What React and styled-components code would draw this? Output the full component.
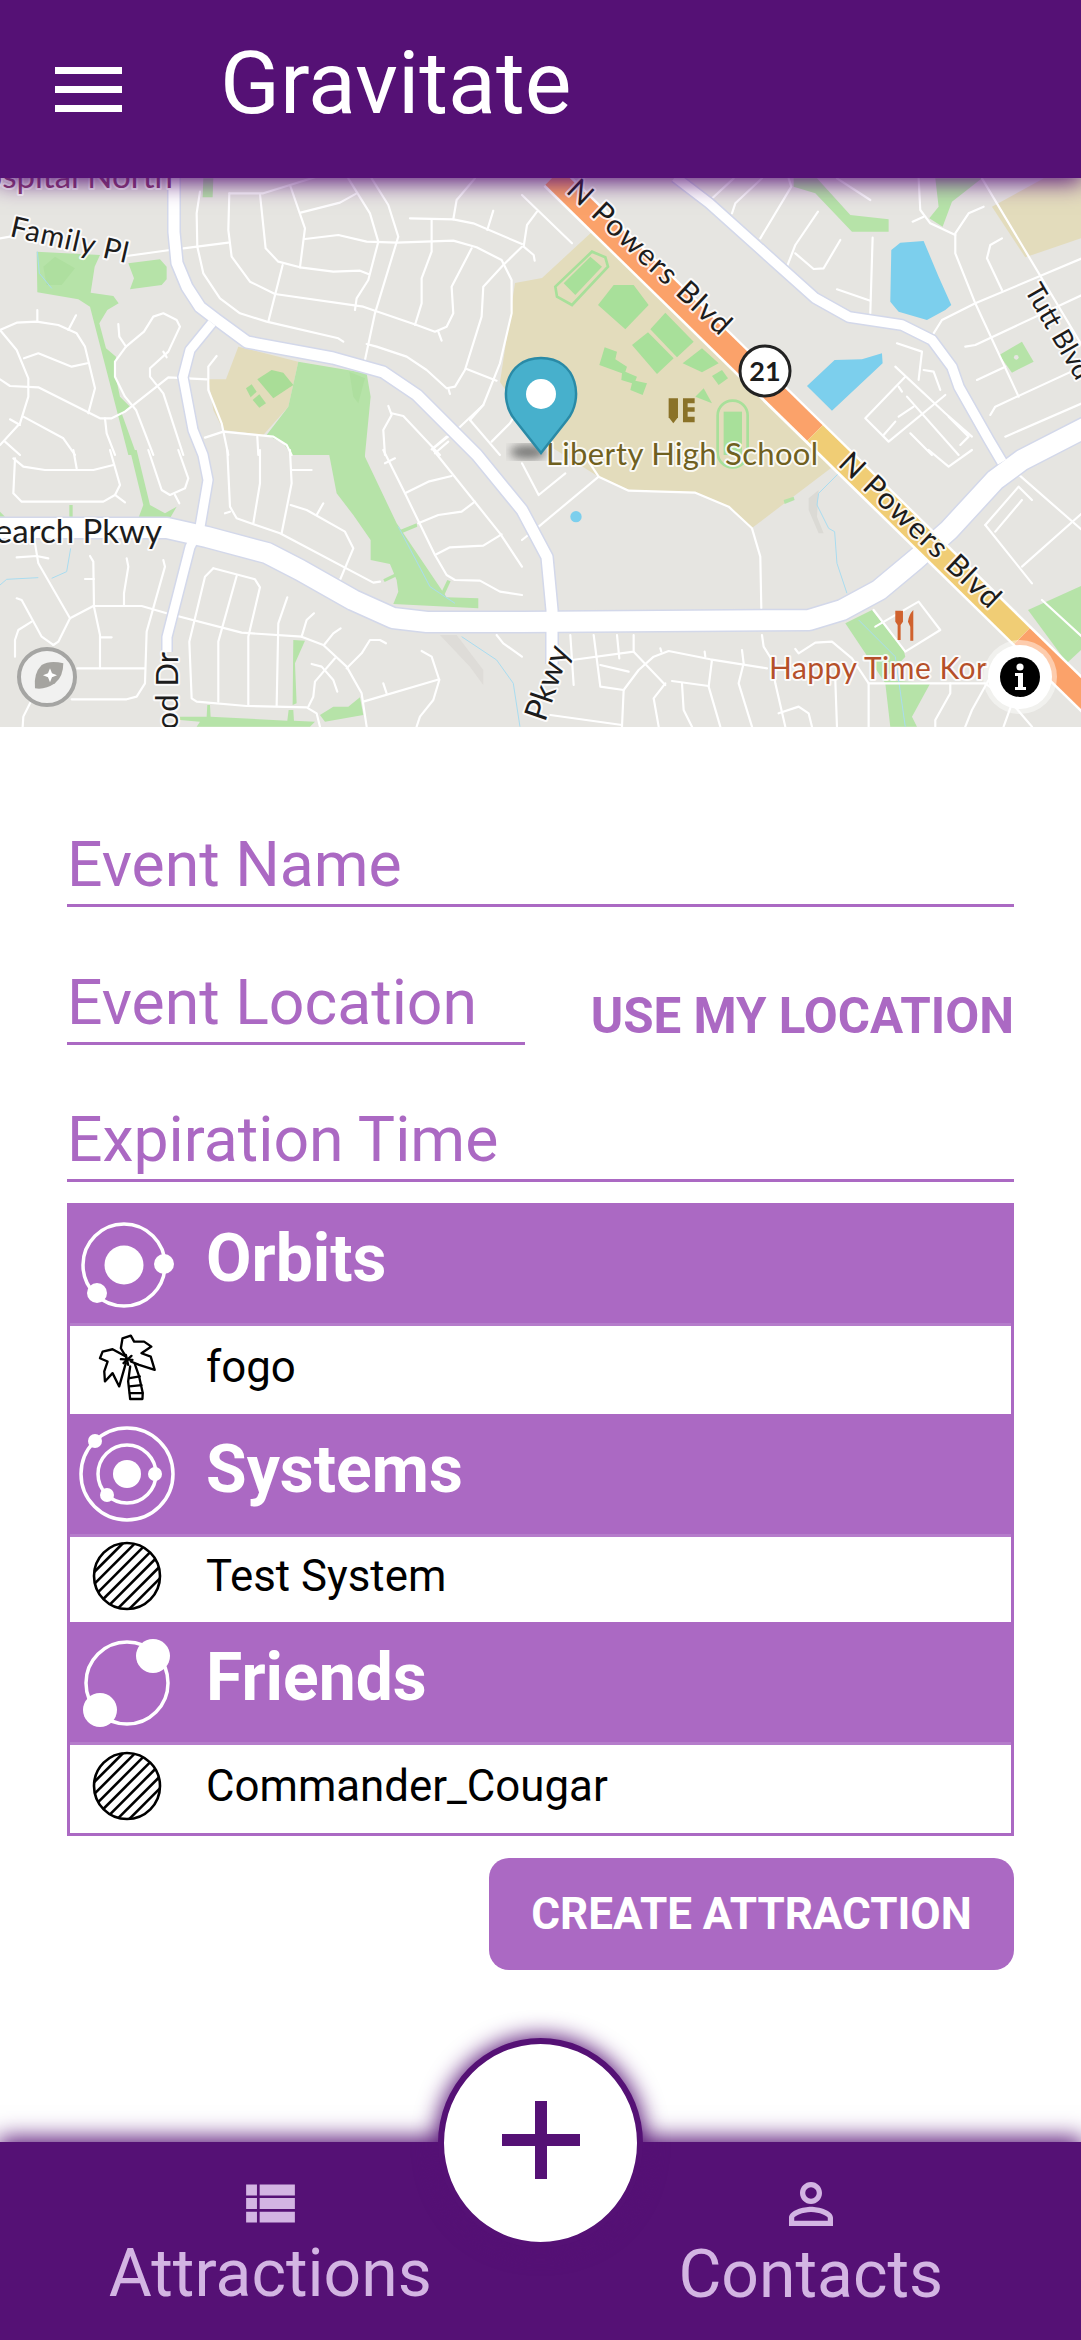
import React from "react";
import styled, { createGlobalStyle } from "styled-components";
import { MdViewList, MdPersonOutline } from "react-icons/md";

const PURPLE = "#551175";
const LILAC = "#ab69c3";

const Global = createGlobalStyle`
  html, body { margin: 0; padding: 0; background: #fff; }
  body { font-family: Roboto, "Liberation Sans", sans-serif; }
`;

const Page = styled.div`
  width: 1081px; height: 2340px; display: flex; flex-direction: column; overflow: hidden; background: #fff;
`;
const TopBar = styled.header`
  height: 178px; flex: none; display: flex; align-items: center; background: ${PURPLE};
  padding-left: 55px; box-sizing: border-box; position: relative; z-index: 2;
  box-shadow: 0 2px 22px 2px ${PURPLE};
`;
const Burger = styled.div`
  width: 67px; display: flex; flex-direction: column; gap: 12px; margin-right: 98px;
  span { display: block; height: 7px; background: #fff; }
`;
const Title = styled.h1`
  margin: 0; font-size: 88px; line-height: 1; font-weight: 400; color: #fff; padding-bottom: 12px;
`;
const MapSvg = styled.svg`
  display: block; flex: none; width: 1081px; height: 549px; background: #e6e5e1;
`;
const Label = styled.text`
  font-family: Lato, "Noto Sans", sans-serif; font-size: ${p => p.$size || 29}px; fill: ${p => p.$color || "#1c1c1c"};
  paint-order: stroke; stroke: rgba(255,255,255,.85); stroke-width: 4px; stroke-linejoin: round;
`;
const ShieldText = styled.text`
  font-family: Lato, "Noto Sans", sans-serif; font-weight: 700; font-size: 27px; fill: #1c1c1c; text-anchor: middle;
`;
const Form = styled.main`
  flex: 1; display: flex; flex-direction: column; padding: 88px 67px 0;
`;
const LocationRow = styled.div`
  display: flex; align-items: flex-end; justify-content: space-between; margin-top: 46px;
`;
const Field = styled.div`
  box-sizing: border-box; height: 92px; display: flex; align-items: flex-end; padding-bottom: 8px;
  width: ${p => p.$narrow ? "458px" : "auto"}; margin-top: ${p => p.$spaced ? "45px" : 0};
  border-bottom: 3px solid ${LILAC}; color: ${LILAC}; font-size: 62.5px; line-height: 62px;
`;
const LocationButton = styled.div`
  color: ${LILAC}; font-size: 49.3px; line-height: 50px; font-weight: 700; padding-bottom: 4px;
`;
const List = styled.section`
  margin-top: 21px; border: 3px solid ${LILAC}; border-top: 0; display: flex; flex-direction: column;
`;
const SectionHead = styled.div`
  box-sizing: border-box; height: 123px; display: flex; align-items: center; background: ${LILAC};
  border-bottom: 3px solid #b57ccb; color: #fff; font-weight: 700; font-size: 66px;
`;
const Slot = styled.div`
  width: 114px; flex: none; margin-right: 22px; display: flex; justify-content: center; align-items: center;
`;
const HeadText = styled.span`
  line-height: 66px; padding-bottom: 8px;
`;
const Row = styled.div`
  box-sizing: border-box; height: ${p => p.$h}px; display: flex; align-items: center; color: #000;
  font-size: 43.8px; line-height: 50px; padding-bottom: 7px; background: #fff;
`;
const CreateRow = styled.div`
  display: flex; justify-content: flex-end; margin-top: 22px;
`;
const CreateButton = styled.button`
  width: 525px; height: 112px; border: 0; border-radius: 20px; background: ${LILAC}; color: #fff;
  font-family: inherit; font-size: 44px; font-weight: 700; padding: 0;
`;
const BottomBar = styled.nav`
  height: 198px; flex: none; display: flex; background: ${PURPLE}; position: relative;
  box-shadow: 0 -2px 22px 2px ${PURPLE};
`;
const Tab = styled.div`
  flex: 1; display: flex; flex-direction: column; align-items: center; padding-top: 29px; color: #d3b5e3;
`;
const TabLabel = styled.span`
  font-size: 66px; line-height: 66px; margin-top: 5px;
`;
const Fab = styled.div`
  position: absolute; left: 438px; top: -104px; box-sizing: border-box; width: 205px; height: 210px;
  border-radius: 50%; background: #fff; border: 6px solid ${PURPLE}; box-shadow: 0 0 22px 2px ${PURPLE};
  display: flex; align-items: center; justify-content: center; padding-bottom: 6px;
`;

const A = "translate(0 170) scale(.3333)";
const B = "translate(0 450) scale(.3333)";
const C = "translate(522 170) scale(.3333)";
const D = "translate(522 450) scale(.3333)";

const streets = {
  [A]: [
    "M0,205L30,200","M380,258L510,240","M550,235L685,218",
    "M600,65L590,130L592,230L610,310L660,385L720,430L800,455L1015,505L1030,515",
    "M688,70L685,180L695,260L750,335L825,372L1090,410L1250,465L1305,485L1340,470L1360,430L1355,350L1415,235",
    "M688,70L790,70L870,45L950,20","M780,72L797,235L835,275L900,292L1000,305L1080,302L1105,312",
    "M870,45L915,175L900,292","M902,128L1020,98L1070,70",
    "M915,207L1015,195L1100,215L1190,218L1360,212L1430,232L1505,270L1535,330L1535,430L1500,580L1450,705L1370,780",
    "M1045,25L1110,130L1135,215L1105,330L1070,385L1065,420","M1115,25L1165,105L1195,200L1125,430L1095,570",
    "M1230,145L1360,148L1420,160L1566,222","M1295,148L1295,245L1265,325L1265,400L1245,465",
    "M1360,148L1370,90L1425,25","M1480,122L1462,180",
    "M1566,230L1510,285L1450,350L1445,440L1395,600L1365,650L1340,655L1280,600L1220,560L1130,530L1100,522",
    "M1345,655L1350,672","M1400,597L1490,632","M1315,485L1325,512","M848,285L805,455",
    "M0,480L50,458L110,455L175,465L230,490L255,530L285,655L265,730","M112,420L112,455","M228,436L205,480",
    "M0,480L50,540L85,625L85,680L60,760L0,825","M72,565L115,550L215,590L262,580",
    "M0,628L30,648L115,652L300,745L335,745L375,725L505,622L620,628",
    "M355,462L358,500L378,530L345,575L345,620L375,680L408,720L460,855",
    "M378,530L432,485L460,440L490,430L530,450L540,470L505,545L450,595L450,620L490,670L550,855",
    "M490,545L500,562","M30,748L60,765","M70,740L190,805L225,855","M315,745L320,790L345,855","M15,815L60,855",
    "M650,558L625,590L625,660L665,760L685,855","M615,803L670,785L820,800L860,825L875,855","M772,800L775,855",
    "M1165,708L1175,735L1150,780L1155,855","M1175,730L1210,738L1320,855","M1295,838L1340,800","M1305,850L1345,815",
    "M1370,780L1300,835","M1410,750L1500,855","M1475,815L1530,760L1566,700","M1450,705L1410,750",
  ],
  [B]: [
    "M45,25L40,130L65,155L310,155L345,135L360,105L330,0","M40,25L70,50L135,60L280,60L340,45","M230,55L220,0","M345,135L375,157",
    "M445,0L485,120L510,135L555,115L565,85L535,0","M525,135L538,160",
    "M682,0L690,170L710,205L840,250L1120,398L1140,395","M780,0L780,100L760,220","M870,0L875,100L845,250","M875,60L935,60",
    "M872,165L920,180L1035,245L1060,295L1020,390","M970,160L950,195","M675,190L690,185",
    "M1150,0L1215,130L1305,315L1340,375L1365,390L1440,392L1500,425L1566,435","M1155,40L1185,25",
    "M1215,130L1285,95L1355,78","M1300,0L1500,250L1566,350","M1255,220L1315,195L1385,185L1425,155",
    "M1305,315L1350,292L1450,287L1505,253","M50,322L110,318L145,325","M105,280L115,340L210,505L175,575L160,585",
    "M50,445L65,450L125,560L160,585","M95,515L55,540L45,570L45,620","M270,318L280,335L282,470L300,555L300,655","M300,562L335,562",
    "M255,387L282,387","M380,325L385,350L372,430L372,465","M490,330L495,350L440,545L435,700L410,740L380,748L215,748",
    "M210,505L280,468L425,468L500,490L725,548L905,560L970,585L1040,650L1085,730L1100,830","M232,655L435,655",
    "M640,355L615,380L568,575L575,745L590,755L740,768L920,772L950,790L960,830","M640,355L765,388L780,412L745,560L745,768",
    "M710,378L655,575L655,755","M830,768L835,520L862,442","M905,560L920,510L942,490","M972,585L1000,550L1022,535",
    "M1040,655L1085,610L1110,570L1140,570L1158,580","M935,642L965,650L1000,690L1012,725","M1005,625L945,695L940,740L925,770",
    "M1265,603L1295,620L1318,690L1300,750L1260,800L1250,830","M1090,755L1318,688","M1150,700L1160,730","M95,750L70,800L68,830",
    "M1490,555L1510,580L1566,620",
  ],
  [C]: [
    "M0,75L150,220","M45,125L15,165L5,230L35,255L38,272","M635,25L565,90","M720,25L640,100L630,130","M800,25L808,50L715,205",
    "M888,125L820,225L795,290","M820,250L875,297L905,295L955,210","M1052,203L1045,430","M945,358L1045,392",
    "M945,25L1045,90","M1190,25L1195,120L1225,160L1300,195","M1172,155L1205,140",
    "M1385,110L1340,130L1300,190L1300,250L1360,400L1490,680","M1440,205L1405,225L1395,265L1440,360",
    "M1380,25L1700,560","M1235,490L1260,450L1360,400L1680,265","M1330,530L1360,525L1680,375","M1365,630L1450,590",
    "M1405,735L1420,710L1680,590","M1450,800L1680,700","M1125,520L1200,545L1190,630","M1205,600L1235,605L1255,660",
    "M1120,590L1270,730L1350,800","M1150,620L1030,745L1100,815L1270,675","M1130,650L1140,665","M1155,680L1310,855","M1175,710L1130,740",
    "M1120,755L1085,795","M1280,740L1340,800L1315,825","M1165,790L1230,855",
  ],
  [D]: [
    "M0,40L50,135L130,70","M230,80L50,230L0,270","M200,35L230,80L320,122L520,128L620,170L690,235L715,320L718,475",
    "M720,555L725,590L750,630L760,700L790,830","M145,555L155,705","M215,555L235,710L305,720","M285,555L292,625","M335,555L335,605L150,630",
    "M235,645L320,665","M335,605L430,705","M300,830L305,720L350,660L395,620L440,603L565,628L735,655","M415,595L418,605","M548,605L550,620",
    "M660,600L665,640L650,700L690,830","M570,630L560,710L595,830","M430,700L395,745L410,830","M450,693L560,708","M480,700L485,780L510,830",
    "M85,795L300,825","M770,790L830,770L860,790L870,830","M820,597L830,610L880,578L930,575L990,625L1040,700L1040,830","M940,690L945,830",
    "M1040,700L1230,700L1390,700L1470,760L1530,830","M1055,480L1150,605L1255,540L1190,455L1060,530",
    "M1285,700L1285,730L1240,810L1240,830","M1400,690L1350,780L1330,830","M1470,760L1445,830","M1480,65L1680,240",
    "M1390,225L1490,110L1530,150","M1420,245L1500,150","M1390,225L1530,400","M1500,350L1680,190","M1220,0L1280,50L1350,0",
    "M1560,450L1680,560",
  ],
};

const greens = {
  [A]: [
    "M110,245L300,255L284,290L272,368L340,378L356,400L322,420L298,460L318,535L348,560L345,610L360,680L390,710L365,730L410,855L385,855L270,410L235,388L112,367Z",
    "M385,280L480,268L500,290L500,328L485,345L390,358L402,325Z","M610,25L640,25L638,82L608,82Z",
    "M895,575L1100,610L1112,680L1095,855L875,855L850,820L800,795L865,710Z",
  ],
  [B]: [
    "M208,165L218,165L218,205L208,205Z","M390,0L410,0L450,165L495,190L530,170L510,205L415,205L430,165Z","M0,185L15,200L0,200Z",
    "M985,0L1095,0L1095,20L1190,220L1340,442L1435,445L1435,475L1180,462L1195,425L1190,390L1170,342L1112,330L1112,270L1060,195L1010,130Z",
    "M1200,240L1250,220L1252,230L1205,250Z","M1150,388L1190,368L1192,378L1154,396Z","M1318,440L1342,390L1352,394L1330,442Z",
    "M880,570L915,572L885,640L890,760L878,765Z",
    "M540,800L620,800L622,765L630,765L632,800L862,812L866,780L880,780L882,812L945,815L930,830L590,830L600,815L540,810Z",
    "M960,795L1000,770L1045,770L1080,742L1090,795L975,815Z",
  ],
  [C]: [
    "M815,25L885,25L985,135L1100,148L1100,185L990,185L880,70L815,50Z","M1240,25L1380,25L1290,95L1262,170L1222,145L1250,110Z",
    "M1432,555L1500,515L1535,575L1470,608Z",
  ],
  [D]: [
    "M970,520L1050,480L1145,600L1150,620L1085,690L1225,700L1170,800L1185,830L1105,830L1090,700Z","M785,150L815,140L818,150L788,162Z",
  ],
};
const fieldsC = [
  "M125,340L205,260L240,290L160,375Z","M228,405L275,345L335,345L380,405L310,478Z","M385,478L430,428L515,515L465,562Z",
  "M330,525L378,487L455,565L405,612Z","M482,580L540,535L590,580L540,607Z","M570,618L600,600L618,625L590,645Z",
  "M232,585L248,532L285,545L280,568L315,590L310,605L345,620L340,632L375,640L362,675L325,660L330,640L298,630L300,610Z",
  "M520,680L545,655L570,700Z","M605,725L660,725L660,855L605,855Z",
];

const RoadSet = () => {
  const roads = [
    ["M174,177L174,232L177,263L187,287L200,307L217,320L247,342L333,358L383,372L417,395L477,455L522,510L547,557L552,610L552,664", 11],
    ["M212,323L190,350L183,377L193,430L203,455L208,480L200,527L190,547L167,637L167,652", 9],
    ["M0,528L167,528L207,537L267,553L300,570L353,600L393,618L427,622L522,622L809,620L842,610L879,590L915,560L949,530L995,480L1022,460L1090,425", 20],
    ["M675,177L709,203L815,298L849,317L902,325L932,340L952,367L959,387L989,440L1002,462", 9.5],
  ];
  return (
    <g fill="none" strokeLinejoin="round">
      {roads.map(([d, w]) => <path key={d} d={d} stroke="#d3d8ea" strokeWidth={w + 3} />)}
      {roads.map(([d, w]) => <path key={d} d={d} stroke="#fff" strokeWidth={w} />)}
    </g>
  );
};

const Map = () => (
  <MapSvg viewBox="0 178 1081 549">
    <path d="M515,283L542,278L594,230L835,465L752,528L729,507L695,493L629,490L599,477L540,440L500,382Z" fill="#e3dcbc" />
    <path transform={C} d="M1410,110L1566,25L1720,25L1720,190L1510,262Z" fill="#e3dcbc" />
    <path transform={A} d="M715,530L895,575L865,710L790,795L670,780L640,720L625,628L678,628Z" fill="#e3dcbc" />
    {Object.entries(greens).map(([t, list]) => <g key={t} transform={t} fill="#b6e3a8">{list.map(d => <path key={d} d={d} />)}</g>)}
    <path d="M1028,610L1081,586L1081,650L1067,663Z" fill="#b6e3a8" />
    <g transform={A} fill="#aedf9f">
      <path d="M130,290L165,260L225,295L185,345L140,345Z" />
      <path d="M1048,605L1095,625L1075,700L1060,680Z" />
    </g>
    <g transform={A} fill="#a9dd97">
      <path d="M772,628L815,600L850,608L880,645L820,685Z" />
      <path d="M738,655L755,643L770,665L752,682Z" /><path d="M758,690L778,673L798,700L778,713Z" />
    </g>
    <g transform={C}>
      {fieldsC.map(d => <path key={d} d={d} fill="#a8e09a" />)}
      <path d="M100,350L210,245L250,262L258,290L150,405L105,380Z" fill="none" stroke="#a8e09a" strokeWidth="8" />
      <rect x="587" y="692" width="90" height="200" rx="44" fill="none" stroke="#a8e09a" strokeWidth="8" />
      <path d="M1108,240L1135,218L1205,213L1250,320L1288,405L1270,420L1215,450L1130,425L1105,395Z" fill="#7ccfed" />
      <path d="M855,648L938,570L1020,568L1080,550L1082,580L930,722Z" fill="#7ccfed" />
      <circle cx="1483" cy="562" r="7" fill="#e6e5e1" />
    </g>
    <g transform={D}>
      <circle cx="162" cy="200" r="17" fill="#7ccfed" />
      <path d="M860,145L890,120L885,200L905,250L890,250L860,180Z" fill="#dbdad5" />
      <g fill="none" stroke="#a9dcf0" strokeWidth="3">
        <path d="M950,70L890,130L885,165L920,235L938,245L945,340L975,430" /><path d="M1010,510L1120,620L1150,830" />
      </g>
    </g>
    <g transform={B}>
      <path d="M1320,555L1370,555L1450,660L1450,705L1410,650Z" fill="#dedcd8" />
      <g fill="none" stroke="#a9dcf0" strokeWidth="3">
        <path d="M0,405L20,388L115,383" /><path d="M155,385L200,365L212,295" /><path d="M1385,560L1490,630L1540,700L1560,830" /><path d="M1195,230L1290,410L1365,460" />
      </g>
    </g>
    <g transform={A} fill="none" stroke="#a9dcf0" strokeWidth="3"><path d="M112,245L118,310L155,355" /></g>
    <g fill="none" stroke="#fff" strokeLinejoin="round" strokeLinecap="round">
      {Object.entries(streets).map(([t, list]) => <g key={t} transform={t} strokeWidth="6.5">{list.map(d => <path key={d} d={d} />)}</g>)}
    </g>
    <RoadSet />
    <g>
      <path d="M553,177L1110,722" fill="none" stroke="#fff" strokeWidth="27" />
      <path d="M553,177L815,433" fill="none" stroke="#fba26a" strokeWidth="22" />
      <path d="M815,433L1022,636" fill="none" stroke="#f0cd75" strokeWidth="22" />
      <path d="M1022,636L1110,722" fill="none" stroke="#fba26a" strokeWidth="22" />
    </g>
    <Label x="173" y="188" textAnchor="end" $size={33} $color="#8a3d70">Hospital North</Label>
    <Label x="9" y="236" transform="rotate(13 9 236)" textLength="120" $size={29}>Family Pl</Label>
    <Label x="162" y="543" textAnchor="end" $size={33}>Research Pkwy</Label>
    <Label x="178" y="652" textAnchor="end" transform="rotate(-90 178 652)" $size={31}>Greenwood Dr</Label>
    <Label x="570" y="650" textAnchor="end" transform="rotate(-71 570 650)" $size={32}>Pkwy</Label>
    <Label x="565" y="192" transform="rotate(43 565 192)" textLength="212" $size={30}>N Powers Blvd</Label>
    <Label x="837" y="465" transform="rotate(43.6 837 465)" textLength="210" $size={30}>N Powers Blvd</Label>
    <Label x="1024" y="290" transform="rotate(60 1024 290)" $size={27}>Tutt Blvd</Label>
    <Label x="546" y="465" textLength="272" $size={31} $color="#6f6020">Liberty High School</Label>
    <Label x="769" y="679" textLength="218" $size={30} $color="#b5502a">Happy Time Kor</Label>
    <circle cx="765" cy="371" r="25" fill="#fff" stroke="#222" strokeWidth="3" />
    <ShieldText x="765" y="381">21</ShieldText>
    <g transform={C} fill="#8a7228">
      <path d="M440,685H468V742L454,760L440,742Z" />
      <path d="M483,685H518V700H497V712H518V725H497V740H518V757H483Z" />
    </g>
    <g transform={D} fill="#d0622e">
      <path d="M1120,482H1143V515L1136,525V570H1127V525L1120,515Z" /><path d="M1165,572V530L1158,515Q1160,495 1174,480V572Z" />
    </g>
    <defs><filter id="pinBlur"><feGaussianBlur stdDeviation="5" /></filter></defs>
    <ellipse cx="528" cy="452" rx="18" ry="7" fill="#555" opacity=".75" filter="url(#pinBlur)" />
    <path d="M541,453L515,420C498,400 504,358 541,358C578,358 584,400 567,420Z" fill="#47b0cc" stroke="#2a8aa6" strokeWidth="2.5" />
    <circle cx="541" cy="394" r="15" fill="#fff" />
    <circle cx="1020" cy="677" r="37" fill="#fff" opacity=".45" />
    <circle cx="1020" cy="677" r="32" fill="#fff" />
    <circle cx="1020" cy="677" r="20" fill="#000" />
    <circle cx="1020" cy="667" r="3.6" fill="#fff" />
    <path d="M1015,673H1023V687H1026V690H1015V687H1018V676H1015Z" fill="#fff" />
    <circle cx="47" cy="677" r="28" fill="#f1f1f0" stroke="#a5a5a3" strokeWidth="4" />
    <g transform={B}>
      <path d="M105,715Q100,670 125,645Q150,630 190,640Q190,680 165,700Q135,720 105,715Z" fill="#a5a4a0" />
      <path d="M150,655L156,670L171,676L156,682L150,697L144,682L129,676L144,670Z" fill="#fff" />
    </g>
  </MapSvg>
);

const OrbitsIcon = () => (
  <svg width="100" height="100" viewBox="0 0 100 100" fill="#fff">
    <circle cx="47" cy="52" r="41" fill="none" stroke="#fff" strokeWidth="3.5" />
    <circle cx="47" cy="52" r="19.5" />
    <circle cx="87" cy="51" r="10" />
    <circle cx="20" cy="80" r="10" />
  </svg>
);
const SystemsIcon = () => (
  <svg width="100" height="100" viewBox="0 0 100 100" fill="#fff">
    <circle cx="50" cy="50" r="46" fill="none" stroke="#fff" strokeWidth="3.5" />
    <circle cx="50" cy="50" r="29" fill="none" stroke="#fff" strokeWidth="3.5" />
    <circle cx="50" cy="50" r="14" />
    <circle cx="18" cy="17" r="7" />
    <circle cx="78" cy="50" r="7" />
    <circle cx="30" cy="71" r="7" />
  </svg>
);
const FriendsIcon = () => (
  <svg width="100" height="100" viewBox="0 0 100 100" fill="#fff">
    <circle cx="50" cy="51" r="41" fill="none" stroke="#fff" strokeWidth="3.5" />
    <circle cx="76" cy="24" r="17" />
    <circle cx="23" cy="78" r="17" />
  </svg>
);
const PalmIcon = () => (
  <svg width="67" height="73" viewBox="70 350 200 220" fill="none" stroke="#000" strokeWidth="7" strokeLinejoin="round" strokeLinecap="round">
    <path d="M165,430L150,405L155,375L180,367L190,385L220,385L242,400L212,420L240,430L252,470L205,455L180,445" />
    <path d="M165,430L125,408L95,415L87,435L110,445L100,475L102,505L125,480L145,520L165,450" />
    <path d="M178,460L172,505L176,540L178,558L215,558L216,540L205,490L192,452" />
    <path d="M176,495L207,490M176,520L212,516M177,540L215,540M150,438L185,440M165,425L172,455M182,428L158,450" />
  </svg>
);
const HatchIcon = () => {
  const R = 33;
  const offs = [-26, -17.5, -9, -0.5, 8, 16.5, 25];
  return (
    <svg width="70" height="70" viewBox="-35 -35 70 70" stroke="#000" fill="none" strokeWidth="2.6">
      <circle r={R} />
      {offs.map(o => {
        const h = Math.sqrt(R * R - o * o), k = Math.SQRT1_2;
        return <line key={o} x1={o * k - h * k} y1={o * k + h * k} x2={o * k + h * k} y2={o * k - h * k} />;
      })}
    </svg>
  );
};

const sections = [
  { title: "Orbits", Icon: OrbitsIcon, row: "fogo", RowIcon: PalmIcon, h: 88 },
  { title: "Systems", Icon: SystemsIcon, row: "Test System", RowIcon: HatchIcon, h: 85 },
  { title: "Friends", Icon: FriendsIcon, row: "Commander_Cougar", RowIcon: HatchIcon, h: 88 },
];

export default function App() {
  return (
    <Page>
      <Global />
      <TopBar>
        <Burger><span /><span /><span /></Burger>
        <Title>Gravitate</Title>
      </TopBar>
      <Map />
      <Form>
        <Field>Event Name</Field>
        <LocationRow>
          <Field $narrow>Event Location</Field>
          <LocationButton>USE MY LOCATION</LocationButton>
        </LocationRow>
        <Field $spaced>Expiration Time</Field>
        <List>
          {sections.map(({ title, Icon, row, RowIcon, h }) => (
            <React.Fragment key={title}>
              <SectionHead>
                <Slot><Icon /></Slot>
                <HeadText>{title}</HeadText>
              </SectionHead>
              <Row $h={h}>
                <Slot><RowIcon /></Slot>
                {row}
              </Row>
            </React.Fragment>
          ))}
        </List>
        <CreateRow><CreateButton>CREATE ATTRACTION</CreateButton></CreateRow>
      </Form>
      <BottomBar>
        <Tab><MdViewList size={65} /><TabLabel>Attractions</TabLabel></Tab>
        <Tab><MdPersonOutline size={66} /><TabLabel>Contacts</TabLabel></Tab>
        <Fab>
          <svg width="78" height="78" viewBox="0 0 78 78" fill={PURPLE}><path d="M33,0H45V33H78V45H45V78H33V45H0V33H33Z" /></svg>
        </Fab>
      </BottomBar>
    </Page>
  );
}
